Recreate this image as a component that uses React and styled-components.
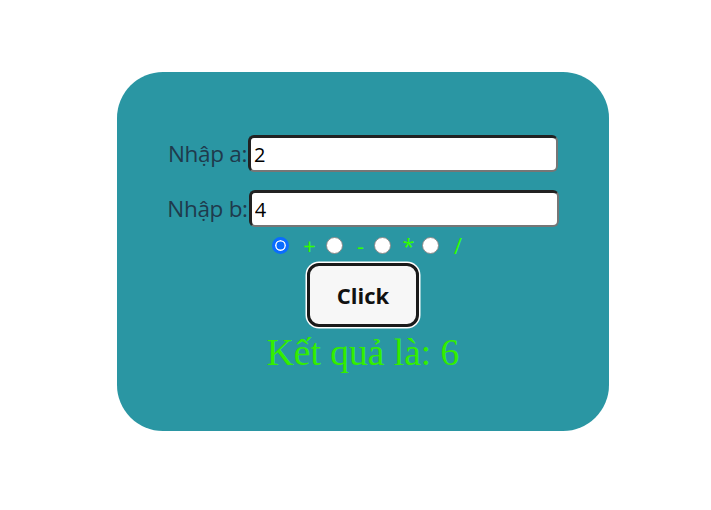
import React, { useState } from "react";
import styled, { createGlobalStyle } from "styled-components";

const GlobalStyle = createGlobalStyle`
  body {
    margin: 0;
    background: #ffffff;
    font-family: "Open Sans", "Noto Sans", sans-serif;
  }
`;

const Page = styled.div`
  padding: 72px 0 0 117px;
`;

const Card = styled.div`
  width: 492px;
  height: 359px;
  box-sizing: border-box;
  padding-top: 63px;
  background: #2a96a3;
  border-radius: 46px;
  display: flex;
  flex-direction: column;
  align-items: center;
`;

const Row = styled.div`
  display: flex;
  align-items: center;
  margin-bottom: ${(props) => props.gap || 0}px;
`;

const Label = styled.label`
  font-size: 22.5px;
  color: #1f3a4c;
  margin-right: 1px;
  letter-spacing: -0.3px;
`;

const Input = styled.input`
  width: 310px;
  height: 37px;
  box-sizing: border-box;
  padding: 0 3px;
  font-family: "Open Sans", "Noto Sans", sans-serif;
  font-size: 20px;
  color: #000;
  background: #fff;
  border-style: solid;
  border-width: 3px 2px 2px 3px;
  border-color: #222 #767676 #767676 #222;
  border-radius: 6px;
  outline: none;
`;

const Options = styled.div`
  display: flex;
  align-items: center;
  height: 22px;
  margin-top: 7px;
  margin-left: 19px;
`;

const Radio = styled.input`
  appearance: none;
  flex: none;
  margin: 0;
  width: 17px;
  height: 17px;
  border-radius: 50%;
  border: 1px solid #8a8a8a;
  background: #fff;
  box-sizing: border-box;

  &:checked {
    border: 3px solid #0a6cff;
    background: #0a6cff;
    box-shadow: inset 0 0 0 1.5px #fff;
  }
`;

const Op = styled.span`
  font-size: 22px;
  color: #33ff00;
  width: ${(props) => props.w}px;
  text-align: center;
  padding-left: 4px;
  box-sizing: border-box;
`;

const Button = styled.button`
  margin-top: 7px;
  width: 112px;
  height: 64px;
  box-sizing: border-box;
  background: #f7f7f7;
  border: 3px solid #1a1a1a;
  border-radius: 12px;
  box-shadow: 0 0 0 1.5px #ffffff;
  font-family: "Open Sans", "Noto Sans", sans-serif;
  font-size: 22px;
  font-weight: 700;
  color: #111;
  cursor: pointer;
`;

const Result = styled.div`
  margin-top: 4px;
  font-family: "Liberation Serif", "Times New Roman", serif;
  font-size: 37.5px;
  color: #33ee00;
  line-height: 44px;
`;

const ops = [
  { v: "+", w: 37 },
  { v: "-", w: 31 },
  { v: "*", w: 31 },
  { v: "/", w: 34 },
];

export default function App() {
  const [a, setA] = useState("2");
  const [b, setB] = useState("4");
  const [op, setOp] = useState("+");
  const [res, setRes] = useState(6);

  const calc = () => {
    const x = Number(a);
    const y = Number(b);
    if (op === "+") setRes(x + y);
    if (op === "-") setRes(x - y);
    if (op === "*") setRes(x * y);
    if (op === "/") setRes(x / y);
  };

  return (
    <>
      <GlobalStyle />
      <Page>
        <Card>
          <Row gap={18}>
            <Label>Nhập a:</Label>
            <Input value={a} onChange={(e) => setA(e.target.value)} />
          </Row>
          <Row>
            <Label>Nhập b:</Label>
            <Input value={b} onChange={(e) => setB(e.target.value)} />
          </Row>
          <Options>
            {ops.map((o) => (
              <React.Fragment key={o.v}>
                <Radio
                  type="radio"
                  name="op"
                  checked={op === o.v}
                  onChange={() => setOp(o.v)}
                />
                <Op w={o.w}>{o.v}</Op>
              </React.Fragment>
            ))}
          </Options>
          <Button onClick={calc}>Click</Button>
          <Result>Kết quả là: {res}</Result>
        </Card>
      </Page>
    </>
  );
}
